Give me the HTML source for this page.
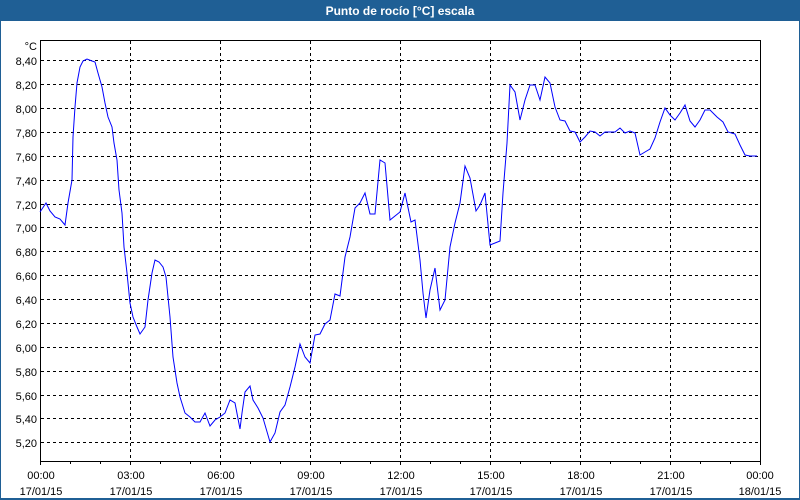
<!DOCTYPE html>
<html><head><meta charset="utf-8"><style>
html,body{margin:0;padding:0;width:800px;height:500px;overflow:hidden;background:#fff;}
svg{display:block}
</style></head><body>
<svg width="800" height="500" xmlns="http://www.w3.org/2000/svg" font-family="Liberation Sans, DejaVu Sans, sans-serif">
<rect x="0" y="0" width="800" height="500" fill="#fff"/>
<rect x="0" y="0" width="800" height="21" fill="#1f5f95"/>
<rect x="0" y="0" width="1" height="500" fill="#1f5f95"/>
<rect x="799" y="0" width="1" height="500" fill="#1f5f95"/>
<rect x="0" y="498" width="800" height="2" fill="#1f5f95"/>
<text x="400" y="15" text-anchor="middle" font-size="12" font-weight="bold" fill="#fff">Punto de rocío [°C] escala</text>
<g stroke="#000" stroke-width="1" stroke-dasharray="3,3" shape-rendering="crispEdges">
<line x1="41" y1="60.5" x2="760" y2="60.5"/><line x1="41" y1="84.5" x2="760" y2="84.5"/><line x1="41" y1="108.5" x2="760" y2="108.5"/><line x1="41" y1="132.5" x2="760" y2="132.5"/><line x1="41" y1="156.5" x2="760" y2="156.5"/><line x1="41" y1="180.5" x2="760" y2="180.5"/><line x1="41" y1="204.5" x2="760" y2="204.5"/><line x1="41" y1="227.5" x2="760" y2="227.5"/><line x1="41" y1="251.5" x2="760" y2="251.5"/><line x1="41" y1="275.5" x2="760" y2="275.5"/><line x1="41" y1="299.5" x2="760" y2="299.5"/><line x1="41" y1="323.5" x2="760" y2="323.5"/><line x1="41" y1="347.5" x2="760" y2="347.5"/><line x1="41" y1="371.5" x2="760" y2="371.5"/><line x1="41" y1="395.5" x2="760" y2="395.5"/><line x1="41" y1="418.5" x2="760" y2="418.5"/><line x1="41" y1="442.5" x2="760" y2="442.5"/>
<line x1="130.5" y1="41" x2="130.5" y2="461"/><line x1="220.5" y1="41" x2="220.5" y2="461"/><line x1="310.5" y1="41" x2="310.5" y2="461"/><line x1="400.5" y1="41" x2="400.5" y2="461"/><line x1="490.5" y1="41" x2="490.5" y2="461"/><line x1="580.5" y1="41" x2="580.5" y2="461"/><line x1="670.5" y1="41" x2="670.5" y2="461"/>
</g>
<rect x="40.5" y="40.5" width="720" height="421" fill="none" stroke="#000" shape-rendering="crispEdges"/>
<g stroke="#000" shape-rendering="crispEdges">
<line x1="40.5" y1="461" x2="40.5" y2="465"/><line x1="70.5" y1="461" x2="70.5" y2="464"/><line x1="100.5" y1="461" x2="100.5" y2="464"/><line x1="130.5" y1="461" x2="130.5" y2="465"/><line x1="160.5" y1="461" x2="160.5" y2="464"/><line x1="190.5" y1="461" x2="190.5" y2="464"/><line x1="220.5" y1="461" x2="220.5" y2="465"/><line x1="250.5" y1="461" x2="250.5" y2="464"/><line x1="280.5" y1="461" x2="280.5" y2="464"/><line x1="310.5" y1="461" x2="310.5" y2="465"/><line x1="340.5" y1="461" x2="340.5" y2="464"/><line x1="370.5" y1="461" x2="370.5" y2="464"/><line x1="400.5" y1="461" x2="400.5" y2="465"/><line x1="430.5" y1="461" x2="430.5" y2="464"/><line x1="460.5" y1="461" x2="460.5" y2="464"/><line x1="490.5" y1="461" x2="490.5" y2="465"/><line x1="520.5" y1="461" x2="520.5" y2="464"/><line x1="550.5" y1="461" x2="550.5" y2="464"/><line x1="580.5" y1="461" x2="580.5" y2="465"/><line x1="610.5" y1="461" x2="610.5" y2="464"/><line x1="640.5" y1="461" x2="640.5" y2="464"/><line x1="670.5" y1="461" x2="670.5" y2="465"/><line x1="700.5" y1="461" x2="700.5" y2="464"/><line x1="730.5" y1="461" x2="730.5" y2="464"/><line x1="760.5" y1="461" x2="760.5" y2="465"/>
</g>
<g font-size="11" fill="#000" text-anchor="end">
<text x="37" y="50">°C</text>
<text x="37" y="65">8,40</text><text x="37" y="89">8,20</text><text x="37" y="113">8,00</text><text x="37" y="137">7,80</text><text x="37" y="161">7,60</text><text x="37" y="185">7,40</text><text x="37" y="209">7,20</text><text x="37" y="232">7,00</text><text x="37" y="256">6,80</text><text x="37" y="280">6,60</text><text x="37" y="304">6,40</text><text x="37" y="328">6,20</text><text x="37" y="352">6,00</text><text x="37" y="376">5,80</text><text x="37" y="400">5,60</text><text x="37" y="423">5,40</text><text x="37" y="447">5,20</text>
</g>
<g font-size="11" fill="#000" text-anchor="middle">
<text x="41" y="479">00:00</text><text x="41" y="495">17/01/15</text>
<text x="131" y="479">03:00</text><text x="131" y="495">17/01/15</text>
<text x="221" y="479">06:00</text><text x="221" y="495">17/01/15</text>
<text x="311" y="479">09:00</text><text x="311" y="495">17/01/15</text>
<text x="401" y="479">12:00</text><text x="401" y="495">17/01/15</text>
<text x="491" y="479">15:00</text><text x="491" y="495">17/01/15</text>
<text x="581" y="479">18:00</text><text x="581" y="495">17/01/15</text>
<text x="671" y="479">21:00</text><text x="671" y="495">17/01/15</text>
<text x="760" y="479">00:00</text><text x="760" y="495">18/01/15</text>
</g>
<polyline fill="none" stroke="#0000ff" stroke-width="1" points="40,212 46,203 50,211 55,217 60,219 65,225 68,203 72,180 73,137 75,107 77,83 80,67 83,61 87,59 92,61 95,62 98,73 102,87 105,103 108,117 112,127 114,143 117,160 119,190 122,213 124,247 127,273 130,303 133,317 137,327 140,334 145,327 148,300 152,273 155,260 159,262 163,267 166,277 170,317 173,357 177,383 180,397 185,413 190,417 195,422 200,422 205,413 210,426 215,420 220,417 225,413 230,400 235,403 240,429 242,413 245,392 250,386 253,400 258,408 263,418 270,442 275,433 280,412 285,405 290,387 295,367 300,344 305,357 310,363 315,335 320,334 325,324 330,320 335,294 340,296 345,257 350,237 355,208 360,203 365,193 370,214 375,214 380,160 385,163 390,220 400,212 405,193 411,222 415,220 420,260 423,293 426,318 430,290 435,268 440,310 445,300 450,247 455,223 460,203 465,166 470,178 476,211 480,205 485,193 490,245 500,241 503,193 507,143 510,85 515,92 520,120 525,100 530,85 535,85 540,100 545,77 550,83 555,107 560,120 565,121 570,131 575,132 580,142 585,137 590,131 595,132 600,136 605,132 615,132 620,128 625,133 630,131 635,133 640,155 645,152 650,149 655,138 660,122 665,108 670,115 675,120 680,113 685,105 690,121 695,127 700,120 705,110 710,110 717,117 723,122 728,132 735,134 740,145 745,155 750,156 757,156"/>
</svg>
</body></html>
